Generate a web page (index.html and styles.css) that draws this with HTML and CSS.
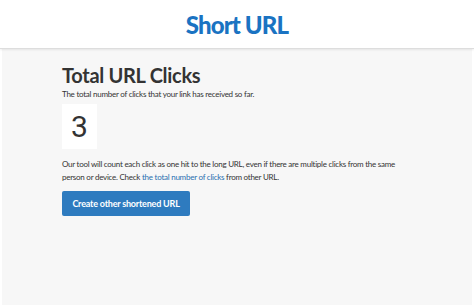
FILE: index.html
```html
<!DOCTYPE html>
<html>
<head>
<meta charset="utf-8">
<link rel="stylesheet" href="styles.css">
</head>
<body>
<header class="site-header">
  <h1 class="logo">Short URL</h1>
</header>
<main class="page">
  <section class="content">
    <h2 class="title">Total URL Clicks</h2>
    <p class="lead">The total number of clicks that your link has received so far.</p>
    <div class="count">3</div>
    <p class="note">Our tool will count each click as one hit to the long URL, even if there are multiple clicks from the same person or device. Check <a href="#" class="link">the total number of clicks</a> from other URL.</p>
    <a href="#" class="btn">Create other shortened URL</a>
  </section>
</main>
</body>
</html>
```
FILE: styles.css
```css
html, body {
  margin: 0;
  padding: 0;
  background: #ffffff;
  font-family: "Lato", "Liberation Sans", sans-serif;
  color: #333333;
}
.site-header {
  height: 48px;
  display: flex;
  align-items: center;
  justify-content: center;
  background: #ffffff;
  border-bottom: 1px solid #dddddd;
  box-shadow: 0 1px 2px rgba(0,0,0,0.08);
  position: relative;
  z-index: 1;
}
.logo {
  margin: 0;
  font-size: 24px;
  font-weight: 900;
  color: #1a73c2;
  letter-spacing: -0.9px;
}
.page {
  margin: 0 2px;
  background: #f7f7f7;
  height: 256px;
}
.content {
  padding: 14px 0 0 60px;
  width: 345px;
}
.title {
  margin: 0;
  font-size: 20px;
  font-weight: 700;
  color: #333333;
  line-height: 24px;
  letter-spacing: -0.3px;
}
.lead {
  margin: 2px 0 0;
  font-size: 8px;
  line-height: 11px;
  letter-spacing: -0.25px;
}
.count {
  margin-top: 4px;
  width: 35px;
  height: 45px;
  background: #ffffff;
  display: flex;
  align-items: center;
  justify-content: center;
  font-family: "Roboto", "Liberation Sans", sans-serif;
  font-size: 30px;
  color: #333333;
}
.note {
  margin: 9px 0 0;
  font-size: 8px;
  line-height: 13px;
  letter-spacing: -0.25px;
}
.link {
  color: #2a6fb0;
  text-decoration: none;
}
.btn {
  display: inline-block;
  margin-top: 7px;
  width: 128px;
  height: 25px;
  line-height: 25px;
  text-align: center;
  background: #2e7bbf;
  color: #ffffff;
  font-size: 9px;
  font-weight: 700;
  letter-spacing: -0.2px;
  text-decoration: none;
  border-radius: 2px;
}
```
